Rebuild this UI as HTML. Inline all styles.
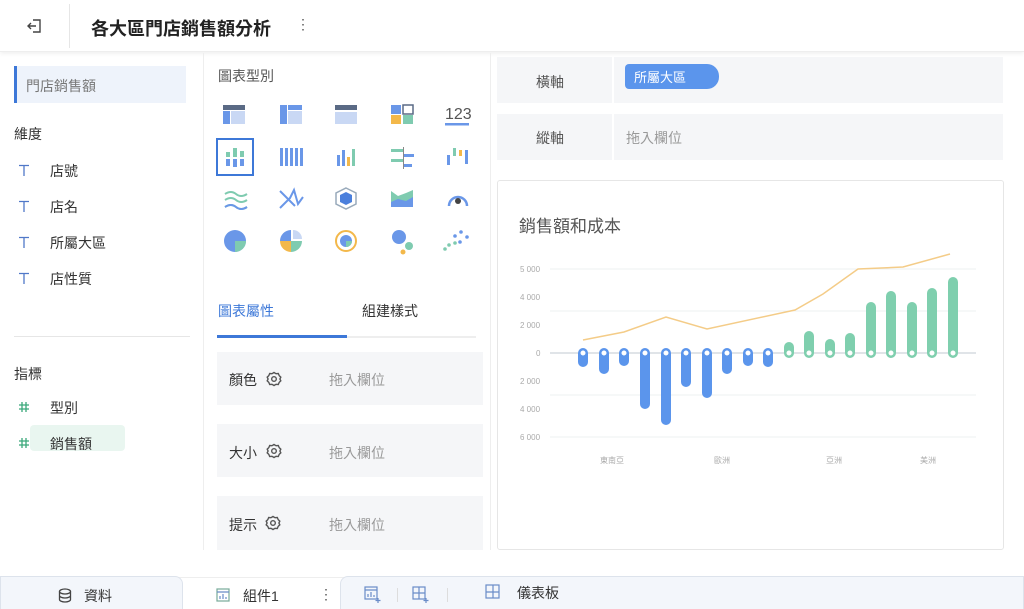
<!DOCTYPE html>
<html><head><meta charset="utf-8"><style>
*{box-sizing:border-box;margin:0;padding:0}
body{width:1024px;height:609px;overflow:hidden;background:#fff;font-family:"Liberation Sans","Noto Sans CJK TC",sans-serif;color:#333;position:relative}
.abs{position:absolute}
.top{left:0;top:0;width:1024px;height:52px;background:#fff;box-shadow:0 2px 4px rgba(0,0,0,.06);border-bottom:1px solid #eee}
.t{font-size:14px}
.field{background:#f5f6f8}
.ti{position:absolute;width:12px;height:12px}
</style></head><body>
<div class="abs top"></div>
<svg class="abs" style="left:27px;top:18px" width="16" height="16" fill="none" stroke="#444" stroke-width="1.4"><path d="M6 2h7v12H6M1 8h8M4 5L1 8l3 3"/></svg>
<div class="abs" style="left:69px;top:4px;width:1px;height:44px;background:#e6e6e6"></div>
<div class="abs" style="left:91px;top:15px;font-size:18px;font-weight:bold;color:#222">各大區門店銷售額分析</div>
<div class="abs" style="left:296px;top:16px;font-size:14px;color:#555">⋮</div>

<!-- left panel -->
<div class="abs" style="left:203px;top:53px;width:1px;height:497px;background:#eee"></div>
<div class="abs" style="left:14px;top:66px;width:172px;height:37px;background:#eef3fb;border-left:3px solid #3d78d8"></div>
<div class="abs t" style="left:26px;top:76px;color:#777">門店銷售額</div>
<div class="abs t" style="left:14px;top:124px">維度</div>
<svg class="abs" style="left:18px;top:164px" width="12" height="12" stroke="#5078c8" stroke-width="1.3"><path d="M1 1.5h10M6 1.5V12"/></svg><div class="abs t" style="left:50px;top:161px">店號</div>
<svg class="abs" style="left:18px;top:200px" width="12" height="12" stroke="#5078c8" stroke-width="1.3"><path d="M1 1.5h10M6 1.5V12"/></svg><div class="abs t" style="left:50px;top:197px">店名</div>
<svg class="abs" style="left:18px;top:236px" width="12" height="12" stroke="#5078c8" stroke-width="1.3"><path d="M1 1.5h10M6 1.5V12"/></svg><div class="abs t" style="left:50px;top:233px">所屬大區</div>
<svg class="abs" style="left:18px;top:272px" width="12" height="12" stroke="#5078c8" stroke-width="1.3"><path d="M1 1.5h10M6 1.5V12"/></svg><div class="abs t" style="left:50px;top:269px">店性質</div>
<div class="abs" style="left:14px;top:336px;width:176px;height:1px;background:#e6e6e6"></div>
<div class="abs t" style="left:14px;top:364px">指標</div>
<svg class="abs" style="left:18px;top:401px" width="12" height="12" stroke="#3aa87a" stroke-width="1.3"><path d="M4 1v10M8 1v10M1 4h10M1 8h10"/></svg><div class="abs t" style="left:50px;top:398px">型別</div>
<div class="abs" style="left:30px;top:425px;width:95px;height:26px;background:#e4f4ec;border-radius:4px;opacity:.8"></div>
<svg class="abs" style="left:18px;top:437px" width="12" height="12" stroke="#3aa87a" stroke-width="1.3"><path d="M4 1v10M8 1v10M1 4h10M1 8h10"/></svg><div class="abs t" style="left:50px;top:434px">銷售額</div>

<!-- middle -->
<div class="abs t" style="left:218px;top:66px;color:#555">圖表型別</div>
<svg class="abs" style="left:215px;top:95px" width="270" height="160">
<g>
<rect x="8" y="10" width="22" height="5" fill="#5a6a85"/><rect x="8" y="16" width="7" height="13" fill="#6a97e8"/><rect x="16" y="16" width="14" height="13" fill="#c9d8f4"/>
<rect x="65" y="10" width="7" height="19" fill="#6a97e8"/><rect x="73" y="10" width="14" height="5" fill="#6a97e8"/><rect x="73" y="16" width="14" height="13" fill="#c9d8f4"/>
<rect x="120" y="10" width="22" height="5" fill="#5a6a85"/><rect x="120" y="17" width="22" height="12" fill="#c9d8f4"/>
<rect x="176" y="10" width="10" height="9" fill="#6a97e8"/><rect x="188" y="10" width="10" height="9" fill="#fff" stroke="#5a6a85" stroke-width="1.5"/><rect x="176" y="20" width="10" height="9" fill="#f3b84a"/><rect x="188" y="20" width="10" height="9" fill="#7fcbb0"/>
<text x="230" y="24" font-size="16" fill="#555" font-family="Liberation Sans">123</text><rect x="230" y="28" width="24" height="2.5" fill="#6a97e8"/>
</g>
<rect x="2" y="44" width="36" height="36" fill="none" stroke="#3d78d8" stroke-width="2"/>
<g fill="#6a97e8"><rect x="11" y="64" width="4" height="7"/><rect x="18" y="64" width="4" height="8"/><rect x="25" y="64" width="4" height="7"/></g>
<g fill="#7fcbb0"><rect x="11" y="57" width="4" height="5"/><rect x="18" y="53" width="4" height="9"/><rect x="25" y="56" width="4" height="6"/></g>
<g fill="#6a97e8"><rect x="65" y="53" width="3" height="18"/><rect x="70" y="53" width="3" height="18"/><rect x="75" y="53" width="3" height="18"/><rect x="80" y="53" width="3" height="18"/><rect x="85" y="53" width="3" height="18"/></g>
<rect x="122" y="60" width="3" height="11" fill="#6a97e8"/><rect x="127" y="55" width="3" height="16" fill="#6a97e8"/><rect x="132" y="62" width="3" height="9" fill="#f3b84a"/><rect x="137" y="54" width="3" height="17" fill="#7fcbb0"/>
<rect x="176" y="54" width="12" height="3" fill="#7fcbb0"/><rect x="189" y="59" width="10" height="3" fill="#6a97e8"/><rect x="176" y="64" width="12" height="3" fill="#7fcbb0"/><rect x="189" y="69" width="8" height="3" fill="#6a97e8"/><rect x="188" y="52" width="1" height="22" fill="#888"/>
<rect x="232" y="60" width="3" height="10" fill="#6a97e8"/><rect x="238" y="53" width="3" height="8" fill="#7fcbb0"/><rect x="244" y="55" width="3" height="6" fill="#f3b84a"/><rect x="250" y="55" width="3" height="14" fill="#6a97e8"/>
<path d="M10 99q6-4 11 0t11 0M10 105q6-4 11 0t11 0M10 112q6-4 11 0t11 0" stroke-width="2" fill="none" stroke="#7fcbb0"/>
<path d="M10 112q6-4 11 0t11 0" stroke-width="2" fill="none" stroke="#6a97e8"/>
<path d="M65 96l10 10 5 5M65 113l10-10 4-8 4 14 5-7" stroke="#6a97e8" stroke-width="2" fill="none"/>
<path d="M131 93l10 5v11l-10 5-10-5v-11z" fill="#fff" stroke="#9ab" stroke-width="1.5"/><path d="M131 97l6 3v7l-6 3-6-3v-7z" fill="#4a7fdc"/>
<path d="M176 96l7 5 8-3 7-3v17h-22z" fill="#7fcbb0"/><path d="M176 107l7-3 8 2 7-4v10h-22z" fill="#6a97e8"/>
<path d="M234 111a9 9 0 1 1 18 0" stroke="#6a97e8" stroke-width="2.5" fill="none"/><circle cx="243" cy="106" r="3" fill="#444"/>
<circle cx="20" cy="146" r="11" fill="#6a97e8"/><path d="M20 146h11a11 11 0 0 1-11 11z" fill="#7fcbb0"/>
<path d="M76 146v-11a11 11 0 0 0-11 11z" fill="#6a97e8"/><path d="M76 146h11a11 11 0 0 1-11 11z" fill="#7fcbb0"/><path d="M76 146v11a11 11 0 0 1-11-11z" fill="#f3b84a"/><path d="M78 144v-9a9 9 0 0 1 9 9z" fill="#c9d8f4"/>
<circle cx="131" cy="146" r="10" fill="none" stroke="#f3b84a" stroke-width="2"/><circle cx="131" cy="146" r="6" fill="#6a97e8"/><path d="M131 146h6a6 6 0 0 1-6 6z" fill="#7fcbb0"/>
<circle cx="184" cy="142" r="7" fill="#6a97e8"/><circle cx="194" cy="151" r="4" fill="#7fcbb0"/><circle cx="188" cy="157" r="2.5" fill="#f3b84a"/>
<g fill="#6a97e8"><circle cx="246" cy="137" r="1.8"/><circle cx="240" cy="141" r="1.8"/><circle cx="252" cy="142" r="1.8"/><circle cx="245" cy="147" r="1.8"/></g><g fill="#7fcbb0"><circle cx="234" cy="150" r="1.8"/><circle cx="240" cy="148" r="1.8"/><circle cx="230" cy="154" r="1.8"/></g>
</svg>
<div class="abs t" style="left:218px;top:301px;color:#3d78d8">圖表屬性</div>
<div class="abs t" style="left:362px;top:301px;color:#333">組建樣式</div>
<div class="abs" style="left:217px;top:336px;width:259px;height:2px;background:#eee"></div>
<div class="abs" style="left:217px;top:335px;width:130px;height:3px;background:#3d78d8"></div>
<div class="abs field" style="left:217px;top:352px;width:266px;height:53px"></div>
<div class="abs field" style="left:217px;top:424px;width:266px;height:53px"></div>
<div class="abs field" style="left:217px;top:496px;width:266px;height:54px"></div>
<div class="abs t" style="left:229px;top:370px">顏色</div><div class="abs t" style="left:329px;top:370px;color:#999">拖入欄位</div>
<div class="abs t" style="left:229px;top:443px">大小</div><div class="abs t" style="left:329px;top:443px;color:#999">拖入欄位</div>
<div class="abs t" style="left:229px;top:515px">提示</div><div class="abs t" style="left:329px;top:515px;color:#999">拖入欄位</div>
<svg class="abs" style="left:266px;top:371px" width="16" height="16" fill="none" stroke="#555" stroke-width="1.4"><path d="M8 1.5l2 1.2 2.3-.2.9 2.1 1.6 1.6-.9 1.8.9 1.8-1.6 1.6-.9 2.1-2.3-.2-2 1.2-2-1.2-2.3.2-.9-2.1-1.6-1.6.9-1.8-.9-1.8 1.6-1.6.9-2.1 2.3.2z"/><circle cx="8" cy="8" r="2.3"/></svg>
<svg class="abs" style="left:266px;top:443px" width="16" height="16" fill="none" stroke="#555" stroke-width="1.4"><path d="M8 1.5l2 1.2 2.3-.2.9 2.1 1.6 1.6-.9 1.8.9 1.8-1.6 1.6-.9 2.1-2.3-.2-2 1.2-2-1.2-2.3.2-.9-2.1-1.6-1.6.9-1.8-.9-1.8 1.6-1.6.9-2.1 2.3.2z"/><circle cx="8" cy="8" r="2.3"/></svg>
<svg class="abs" style="left:265px;top:515px" width="16" height="16" fill="none" stroke="#555" stroke-width="1.4"><path d="M8 1.5l2 1.2 2.3-.2.9 2.1 1.6 1.6-.9 1.8.9 1.8-1.6 1.6-.9 2.1-2.3-.2-2 1.2-2-1.2-2.3.2-.9-2.1-1.6-1.6.9-1.8-.9-1.8 1.6-1.6.9-2.1 2.3.2z"/><circle cx="8" cy="8" r="2.3"/></svg>
<div class="abs" style="left:490px;top:53px;width:1px;height:497px;background:#eee"></div>

<!-- right -->
<div class="abs field" style="left:497px;top:57px;width:506px;height:46px"></div>
<div class="abs" style="left:612px;top:57px;width:2px;height:46px;background:#fff"></div>
<div class="abs t" style="left:536px;top:72px;color:#555">橫軸</div>
<div class="abs" style="left:625px;top:64px;width:94px;height:25px;background:#5b95ec;border-radius:4px 12px 12px 4px"></div>
<div class="abs" style="left:634px;top:67px;font-size:13px;color:#fff">所屬大區</div>
<div class="abs field" style="left:497px;top:114px;width:506px;height:46px"></div>
<div class="abs" style="left:612px;top:114px;width:2px;height:46px;background:#fff"></div>
<div class="abs t" style="left:536px;top:128px;color:#555">縱軸</div>
<div class="abs t" style="left:626px;top:128px;color:#999">拖入欄位</div>
<div class="abs" style="left:497px;top:180px;width:507px;height:370px;border:1px solid #e6e6e6;border-radius:3px"></div>
<div class="abs" style="left:519px;top:212px;font-size:17px;color:#555">銷售額和成本</div>
<svg class="abs" style="left:500px;top:250px" width="500" height="230" font-family="Liberation Sans" font-size="8" fill="#aaa">
<g stroke="#eef0f2"><line x1="50" x2="476" y1="19" y2="19"/><line x1="50" x2="476" y1="61" y2="61"/><line x1="50" x2="476" y1="145" y2="145"/><line x1="50" x2="476" y1="187" y2="187"/></g>
<line x1="50" x2="476" y1="103" y2="103" stroke="#e0e4e8" stroke-width="2"/>
<text x="20" y="22">5 000</text><text x="20" y="50">4 000</text><text x="20" y="78">2 000</text><text x="36" y="106">0</text><text x="20" y="134">2 000</text><text x="20" y="162">4 000</text><text x="20" y="190">6 000</text>
<text x="100" y="213">東南亞</text><text x="214" y="213">歐洲</text><text x="326" y="213">亞洲</text><text x="420" y="213">美洲</text>
<polyline points="83,90 124,82 166,67 207,79 295,60 323,44 358,19 403,17 450,4" fill="none" stroke="#f4cc88" stroke-width="1.5"/>
<g stroke="#5b95ec" stroke-width="10" stroke-linecap="round">
<line x1="83" x2="83" y1="103" y2="112"/><line x1="104" x2="104" y1="103" y2="119"/><line x1="124" x2="124" y1="103" y2="111"/><line x1="145" x2="145" y1="103" y2="154"/><line x1="166" x2="166" y1="103" y2="170"/><line x1="186" x2="186" y1="103" y2="132"/><line x1="207" x2="207" y1="103" y2="143"/><line x1="227" x2="227" y1="103" y2="119"/><line x1="248" x2="248" y1="103" y2="111"/><line x1="268" x2="268" y1="103" y2="112"/></g>
<g stroke="#7fcfae" stroke-width="10" stroke-linecap="round">
<line x1="289" x2="289" y1="97" y2="103"/><line x1="309" x2="309" y1="86" y2="103"/><line x1="330" x2="330" y1="94" y2="103"/><line x1="350" x2="350" y1="88" y2="103"/><line x1="371" x2="371" y1="57" y2="103"/><line x1="391" x2="391" y1="46" y2="103"/><line x1="412" x2="412" y1="57" y2="103"/><line x1="432" x2="432" y1="43" y2="103"/><line x1="453" x2="453" y1="32" y2="103"/></g>
<g fill="#fff" stroke="#5b95ec" stroke-width="2"><circle cx="83" cy="103" r="3.5"/><circle cx="104" cy="103" r="3.5"/><circle cx="124" cy="103" r="3.5"/><circle cx="145" cy="103" r="3.5"/><circle cx="166" cy="103" r="3.5"/><circle cx="186" cy="103" r="3.5"/><circle cx="207" cy="103" r="3.5"/><circle cx="227" cy="103" r="3.5"/><circle cx="248" cy="103" r="3.5"/><circle cx="268" cy="103" r="3.5"/></g>
<g fill="#fff" stroke="#7fcfae" stroke-width="2"><circle cx="289" cy="103" r="3.5"/><circle cx="309" cy="103" r="3.5"/><circle cx="330" cy="103" r="3.5"/><circle cx="350" cy="103" r="3.5"/><circle cx="371" cy="103" r="3.5"/><circle cx="391" cy="103" r="3.5"/><circle cx="412" cy="103" r="3.5"/><circle cx="432" cy="103" r="3.5"/><circle cx="453" cy="103" r="3.5"/></g>
</svg>

<!-- bottom -->
<div class="abs" style="left:0;top:577px;width:1024px;height:32px;background:#fff;border-top:1px solid #eee"></div>
<div class="abs" style="left:0;top:576px;width:183px;height:33px;background:#f3f6fb;border:1px solid #dde3ec;border-bottom:none;border-radius:0 8px 0 0"></div>
<svg class="abs" style="left:58px;top:588px" width="14" height="15" fill="none" stroke="#444" stroke-width="1.3"><ellipse cx="7" cy="3.5" rx="5.5" ry="2.5"/><path d="M1.5 3.5v8c0 1.4 2.5 2.5 5.5 2.5s5.5-1.1 5.5-2.5v-8M1.5 7.5c0 1.4 2.5 2.5 5.5 2.5s5.5-1.1 5.5-2.5"/></svg>
<div class="abs" style="left:84px;top:586px;font-size:14px;color:#333">資料</div>
<svg class="abs" style="left:216px;top:588px" width="14" height="14" fill="none" stroke="#7a9" stroke-width="1.2"><rect x="1" y="1" width="12" height="12"/><path d="M1 4h12M4 11V8M7 11V6M10 11V9" stroke="#6a8cc8"/></svg>
<div class="abs" style="left:243px;top:586px;font-size:14px;color:#333">組件1</div>
<div class="abs" style="left:319px;top:586px;font-size:14px;color:#555">⋮</div>
<div class="abs" style="left:340px;top:576px;width:684px;height:33px;background:#f3f6fb;border:1px solid #dde3ec;border-bottom:none;border-radius:8px 0 0 0"></div>
<svg class="abs" style="left:364px;top:586px" width="18" height="18" fill="none" stroke="#6a8cc8" stroke-width="1.2"><rect x="1" y="1" width="12" height="12"/><path d="M1 4h12M4 11V8M7 11V6M10 11V9M14 12v5M11.5 14.5h5" /></svg>
<div class="abs" style="left:397px;top:588px;width:1px;height:14px;background:#ddd"></div>
<svg class="abs" style="left:412px;top:586px" width="18" height="18" fill="none" stroke="#6a8cc8" stroke-width="1.2"><rect x="1" y="1" width="12" height="12"/><path d="M7 1v12M1 7h12M14 12v5M11.5 14.5h5"/></svg>
<div class="abs" style="left:447px;top:588px;width:1px;height:14px;background:#ddd"></div>
<svg class="abs" style="left:485px;top:584px" width="15" height="15" fill="none" stroke="#6a8cc8" stroke-width="1.2"><rect x="1" y="1" width="13" height="13"/><path d="M8 1v13M1 8h13"/></svg>
<div class="abs" style="left:517px;top:583px;font-size:14px;color:#333">儀表板</div>
</body></html>
